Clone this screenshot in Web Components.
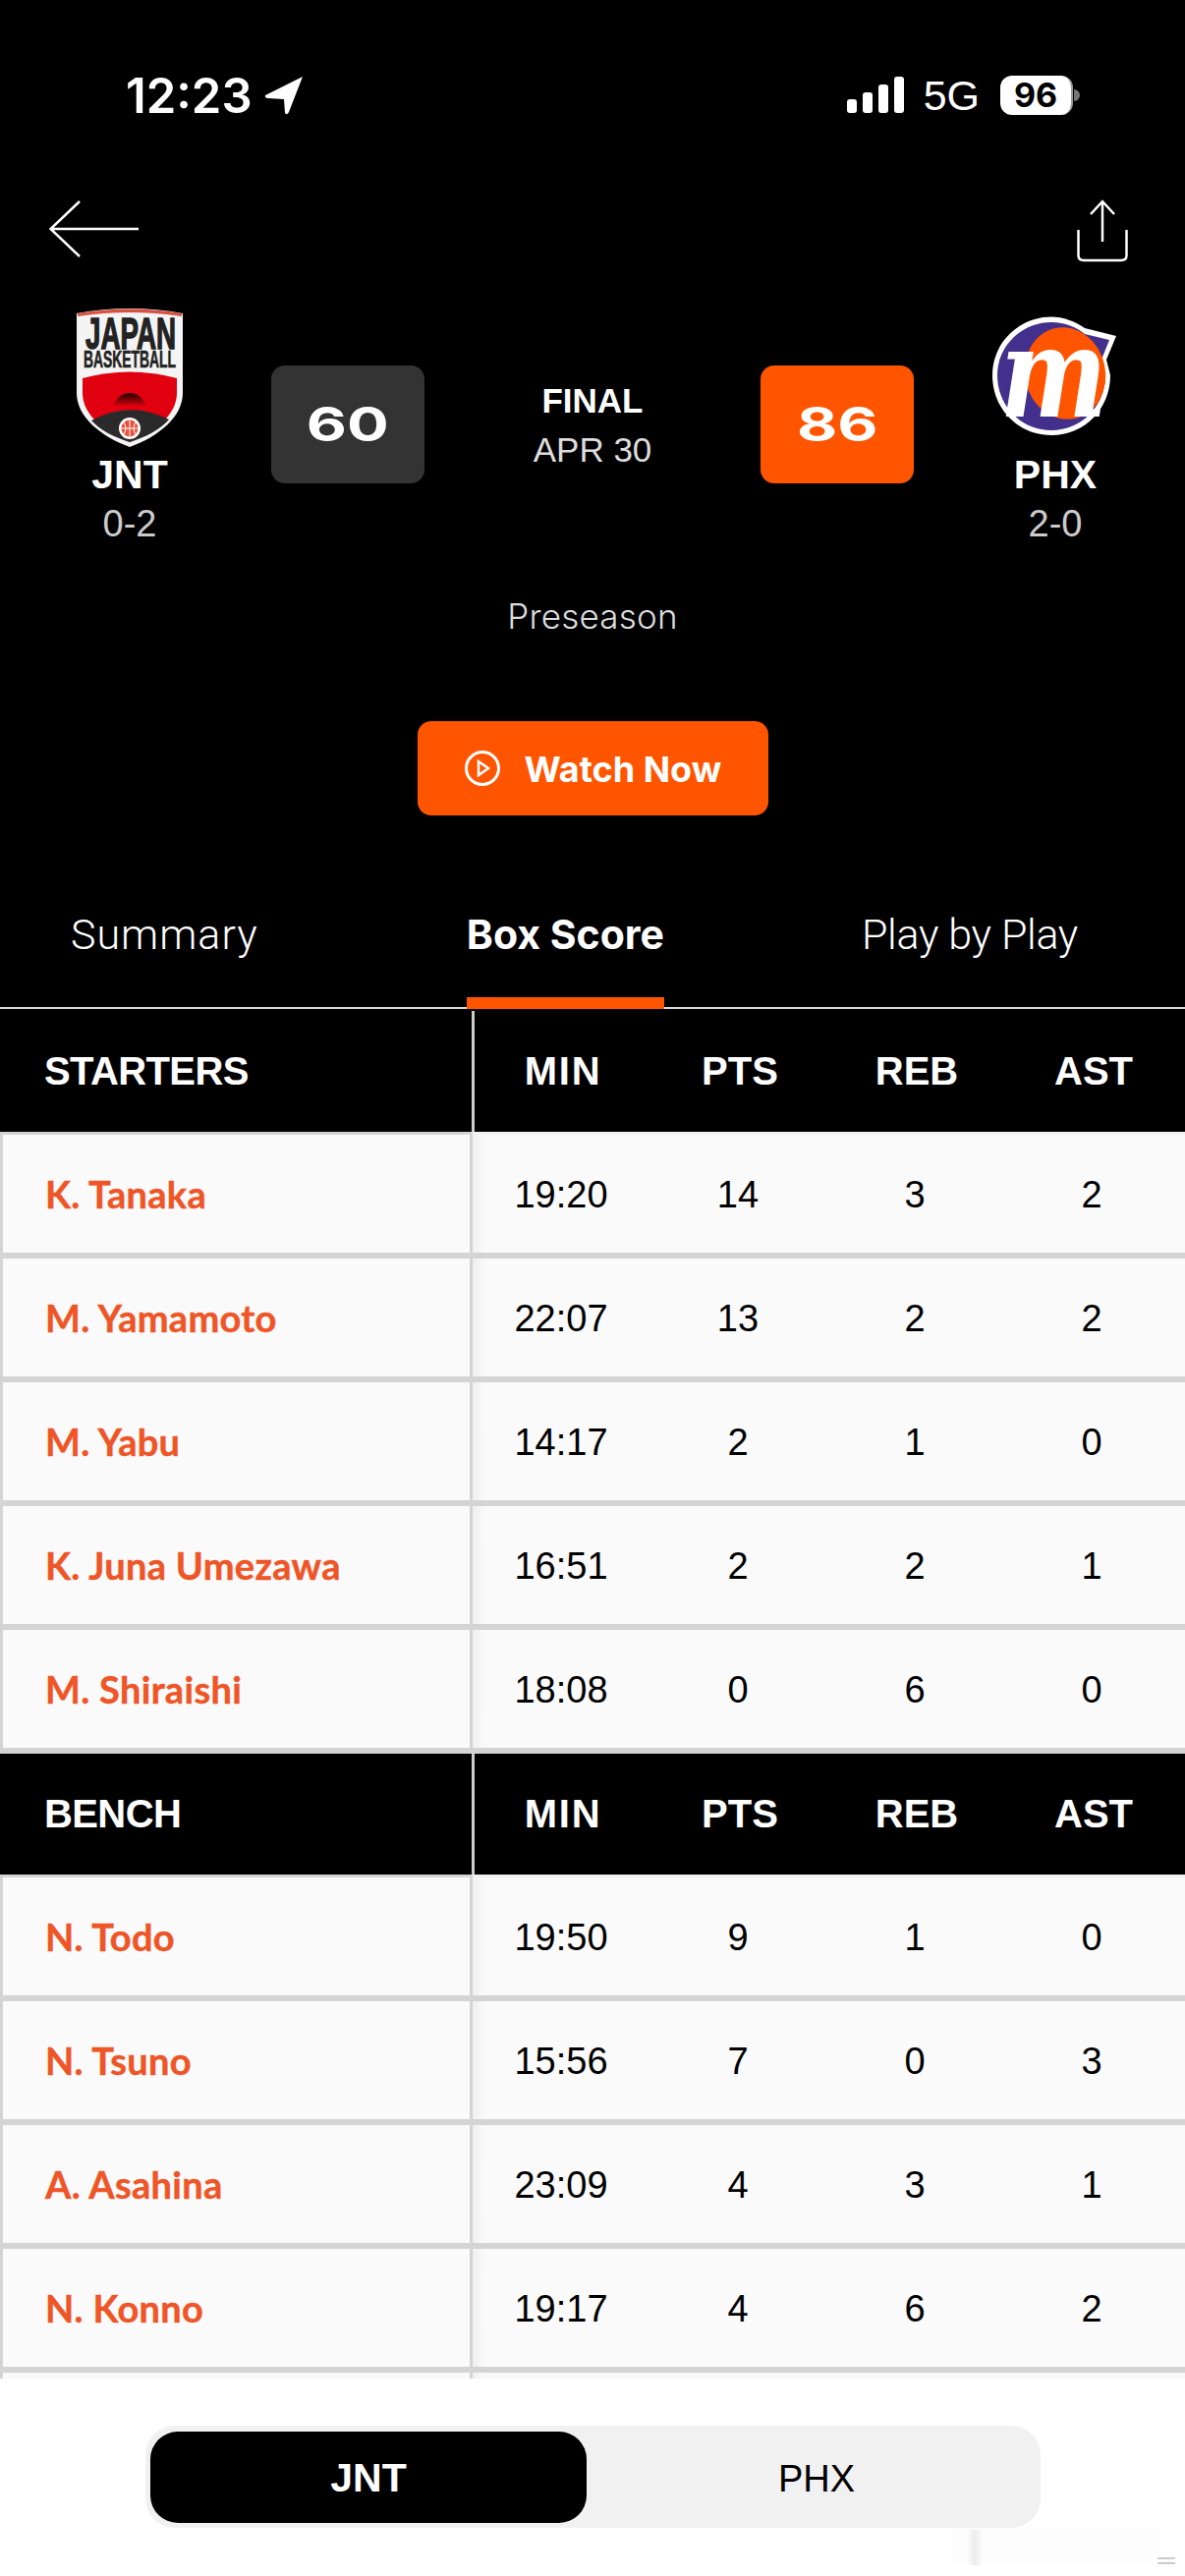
<!DOCTYPE html>
<html>
<head>
<meta charset="utf-8">
<title>Box Score</title>
<style>
    html, body { margin: 0; padding: 0; background: #fff; }
    body { width: 1206px; height: 2622px; overflow: hidden; font-family: "Liberation Sans", Arial, sans-serif; }
    .top { background: #000; display: block; }
</style>
</head>
<body>
<div class="top">
    <status-bar></status-bar>
    <nav-bar></nav-bar>
    <game-header></game-header>
    <watch-button>Watch Now</watch-button>
    <tab-bar></tab-bar>
</div>
<box-table></box-table>
<team-switch></team-switch>

<script>
// Status bar: clock, location arrow, signal, 5G, battery
class StatusBar extends HTMLElement {
    connectedCallback() {
        this.attachShadow({ mode: 'open' }).innerHTML = `
            <style>
                :host { display: flex; align-items: center; height: 190px; padding: 4px 107px 0 128px; box-sizing: border-box; color: #fff; }
                .time { font: 600 49px/1 Inter, sans-serif; letter-spacing: 0; }
                .loc { margin-left: 12px; }
                .right { margin-left: auto; display: flex; align-items: center; }
                .g { font: 400 43px/1 "Liberation Sans", sans-serif; margin-left: 20px; }
                .batt { margin-left: 21px; width: 74px; height: 40px; border-radius: 12px; background: #fff; border-right: 2px solid #999; box-sizing: border-box; color: #000; font: 700 34px/40px Inter, sans-serif; text-align: center; }
                .nub { width: 6px; height: 12px; margin-left: 1px; background: #777; border-radius: 0 6px 6px 0; }
            </style>
            <span class="time">12:23</span>
            <svg class="loc" width="40" height="40" viewBox="0 0 40 40"><path d="M39 1 L1 20 Q0 23 4 23 L20 24 L21 38 Q23 41 25 37 Z" fill="#fff"/></svg>
            <div class="right">
                <svg width="58" height="38" viewBox="0 0 58 38" fill="#fff">
                    <rect x="0" y="23" width="10" height="14" rx="3"/>
                    <rect x="16" y="16" width="10" height="21" rx="3"/>
                    <rect x="32" y="8" width="10" height="29" rx="3"/>
                    <rect x="48" y="0" width="10" height="37" rx="3"/>
                </svg>
                <span class="g">5G</span>
                <span class="batt">96</span>
                <span class="nub"></span>
            </div>`;
    }
}

// Back arrow and share icon
class NavBar extends HTMLElement {
    connectedCallback() {
        this.attachShadow({ mode: 'open' }).innerHTML = `
            <style>
                :host { display: flex; justify-content: space-between; height: 122px; padding: 13px 58px 0 50px; box-sizing: border-box; }
                svg { display: block; fill: none; stroke: #fff; stroke-width: 2.5; }
            </style>
            <svg width="92" height="60" viewBox="0 0 92 60"><path d="M31 2 L1.5 30 L31 58 M1.5 30 H91"/></svg>
            <svg width="52" height="64" viewBox="0 0 52 64"><path d="M26 43 V2 M14 15 L26 2 L38 15 M1.5 31 V57 Q1.5 62 7 62 H45 Q50.500 62 50.500 57 V31"/></svg>`;
    }
}

// One team column: logo slot, abbreviation, record
class TeamBlock extends HTMLElement {
    connectedCallback() {
        this.attachShadow({ mode: 'open' }).innerHTML = `
            <style>
                :host { display: flex; flex-direction: column; align-items: center; color: #fff; }
                .logo { height: 143px; display: flex; align-items: center; justify-content: center; }
                .name { font: 700 41px/46px "Liberation Sans", sans-serif; margin-top: 5px; }
                .rec { font: 400 38px/44px "Liberation Sans", sans-serif; color: #ccc; margin-top: 5px; }
            </style>
            <div class="logo"><slot></slot></div>
            <div class="name">${this.getAttribute('name')}</div>
            <div class="rec">${this.getAttribute('record')}</div>`;
    }
}

class ScoreBox extends HTMLElement {
    connectedCallback() {
        this.attachShadow({ mode: 'open' }).innerHTML = `
            <style>
                :host { display: flex; align-items: center; justify-content: center; width: 156px; height: 120px; margin-top: 60px; border-radius: 14px; background: var(--bg, #333); color: #fff; }
                span { font: 700 48px/1 Inter, sans-serif; transform: scaleX(1.32); }
            </style>
            <span><slot></slot></span>`;
    }
}

class GameHeader extends HTMLElement {
    connectedCallback() {
        this.attachShadow({ mode: 'open' }).innerHTML = `
            <style>
                :host { display: block; color: #fff; }
                .row { display: grid; grid-template-columns: 264px 12px 156px 342px 156px 276px; }
                .c { display: flex; flex-direction: column; align-items: center; padding-top: 76px; font-family: "Liberation Sans", sans-serif; }
                .final { font: 700 35px/40px "Liberation Sans", sans-serif; }
                .date { font: 400 35px/40px "Liberation Sans", sans-serif; margin-top: 10px; color: #ddd; }
                .right { padding-left: 12px; }
                .pre { text-align: center; font: 300 35px/44px Inter, sans-serif; color: #ddd; margin-top: 50px; letter-spacing: .2px; }
                svg { overflow: visible; display: block; }
                text { font-family: "Liberation Sans", sans-serif; }
            </style>
            <div class="row">
                <team-block name="JNT" record="0-2">
                    <svg width="108" height="143" viewBox="0 0 108 143">
                        <defs>
                            <linearGradient id="arch" x1="0" y1="0" x2="0" y2="1">
                                <stop offset="0" stop-color="#200"/><stop offset="1" stop-color="#e0000f"/>
                            </linearGradient>
                        </defs>
                        <path d="M0 7 Q54 -3 108 7 V88 C108 112 84 132 54 143 C24 132 0 112 0 88 Z" fill="#f4f4f4"/>
                        <path d="M1 7 Q54 -2 107 7 L107 10 Q54 2 1 10 Z" fill="#d9503f"/>
                        <text x="55" y="43" text-anchor="middle" font-size="44" font-weight="700" fill="#222" stroke="#222" stroke-width="1.4" textLength="92" lengthAdjust="spacingAndGlyphs">JAPAN</text>
                        <text x="54" y="62" text-anchor="middle" font-size="23" font-weight="700" fill="#222" stroke="#222" stroke-width=".6" textLength="94" lengthAdjust="spacingAndGlyphs">BASKETBALL</text>
                        <path d="M6 73 Q54 60 102 73 V88 C102 110 80 128 54 138 C28 128 6 110 6 88 Z" fill="#e0000f"/>
                        <path d="M37 102 Q42 88 54 88 Q66 88 71 102 Q54 98 37 102 Z" fill="url(#arch)"/>
                        <path d="M15 116 Q54 95 94 115 C84 126 70 133 54 138 C38 133 24 126 15 116 Z" fill="#2a2a2a"/>
                        <circle cx="54" cy="124" r="11" fill="#fff"/>
                        <circle cx="54" cy="124" r="8.500" fill="#e5533d"/>
                        <path d="M54 116 V132 M46 124 H62 M48 118 Q52 124 48 130 M60 118 Q56 124 60 130" stroke="#fff" stroke-width="1" fill="none"/>
                    </svg>
                </team-block>
                <span></span>
                <score-box>60</score-box>
                <div class="c"><span class="final">FINAL</span><span class="date">APR 30</span></div>
                <score-box style="--bg:#ff5500">86</score-box>
                <div class="right">
                    <team-block name="PHX" record="2-0">
                        <svg width="128" height="124" viewBox="0 0 128 124">
                            <path d="M60 .5 C72 .5 84 5 94 12 L126 20 L116 44 L120 60 C120 94 94 121 60 121 C26 121 0 94 0 60 C0 27 27 .5 60 .5 Z" fill="#fff"/>
                            <path d="M60 6 C74 6 86 11 94 18 L119 24 L111 44 L115 60 C115 91 91 116 60 116 C29 116 5 91 5 60 C5 30 30 6 60 6 Z" fill="#43308c"/>
                            <ellipse cx="74" cy="58" rx="41" ry="47" transform="rotate(-12 74 58)" fill="#ff5500"/>
                            <text transform="translate(8 102) scale(.8 1)" font-size="128" font-style="italic" font-weight="700" fill="#fff" style="font-family:'DejaVu Serif',serif">m</text>
                        </svg>
                    </team-block>
                </div>
            </div>
            <div class="pre">Preseason</div>`;
    }
}

class WatchButton extends HTMLElement {
    connectedCallback() {
        this.attachShadow({ mode: 'open' }).innerHTML = `
            <style>
                :host { display: flex; justify-content: center; padding-top: 85px; }
                .btn { display: flex; align-items: center; width: 357px; height: 96px; padding-left: 47px; box-sizing: border-box; border-radius: 14px; background: #ff5500; color: #fff; font: 700 36px/1 Inter, sans-serif; }
                svg { margin-right: 24px; }
                span { margin-top: 2px; }
            </style>
            <div class="btn">
                <svg width="38" height="38" viewBox="0 0 38 38" fill="none" stroke="#fff" stroke-width="3"><circle cx="19" cy="19" r="16.500"/><path d="M15 12 L25 19 L15 26 Z" stroke-width="2.500"/></svg>
                <span><slot></slot></span>
            </div>`;
    }
}

class TabBar extends HTMLElement {
    connectedCallback() {
        this.attachShadow({ mode: 'open' }).innerHTML = `
            <style>
                :host { display: block; height: 199px; box-sizing: border-box; padding-top: 70px; color: #fff; }
                .tabs { display: flex; padding-left: 72px; height: 127px; box-sizing: border-box; border-bottom: 2px solid #d8d8d8; margin-bottom: 2px; }
                .tab { font: 300 43px/56px Roboto, sans-serif; height: 127px; padding-top: 23px; box-sizing: border-box; letter-spacing: 1px; }
                .tab:nth-child(2) { margin-left: 212px; font: 700 41px/56px Inter, sans-serif; letter-spacing: 0; border-bottom: 12px solid #ff5500; }
                .tab:nth-child(3) { margin-left: 201px; letter-spacing: -.3px; }
            </style>
            <div class="tabs">
                <div class="tab">Summary</div>
                <div class="tab">Box Score</div>
                <div class="tab">Play by Play</div>
            </div>`;
    }
}

// Header row and rows of one group of players
class BoxSection extends HTMLElement {
    connectedCallback() {
        const rows = JSON.parse(this.getAttribute('rows'));
        const cols = ['MIN', 'PTS', 'REB', 'AST'];
        this.attachShadow({ mode: 'open' }).innerHTML = `
            <style>
                :host { display: block; font-family: "Liberation Sans", sans-serif; }
                .head, .row { display: grid; grid-template-columns: 481px 180px 180px 180px 185px; }
                .head { height: 123px; background: #000; color: #fff; font: 700 40px/123px "Liberation Sans", sans-serif; }
                .head .t { padding-left: 45px; letter-spacing: -.6px; border-right: 3px solid #ccc; width: 435px; }
                .head .h { text-align: center; transform: translateX(2px); }
                .head .h:nth-child(2) { letter-spacing: 1.8px; }
                .head .h:last-child { padding-right: 5px; }
                .rule { height: 3px; background: linear-gradient(90deg, #d4d4d4 481px, #f2f2f2 481px); }
                .row { height: 126px; color: #000; font: 400 38px/122px "Liberation Sans", sans-serif; background: #fafafa; }
                .name { box-sizing: border-box; height: 126px; padding-left: 43px; border-left: 3px solid #d4d4d4; border-right: 3px solid #d4d4d4; border-bottom: 6px solid #d4d4d4; color: #ee5527; font: 700 38px/120px Lato, sans-serif; letter-spacing: .3px; -webkit-text-stroke: .4px #ee5527; }
                .v { height: 120px; text-align: center; border-bottom: 6px solid #d4d4d4; }
                .v:nth-child(2) { background: linear-gradient(90deg, #efefef, #fafafa 12px); }
                .v:last-child { padding-right: 5px; }
            </style>
            <div class="head">
                <div class="t">${this.getAttribute('label')}</div>
                ${cols.map(c => `<div class="h">${c}</div>`).join('')}
            </div>
            <div class="rule"></div>
            ${rows.map(r => `<div class="row">
                <div class="name">${r[0]}</div>
                ${r.slice(1).map(v => `<div class="v">${v}</div>`).join('')}
            </div>`).join('')}`;
    }
}

class BoxTable extends HTMLElement {
    connectedCallback() {
        const starters = [
            ['K. Tanaka', '19:20', 14, 3, 2],
            ['M. Yamamoto', '22:07', 13, 2, 2],
            ['M. Yabu', '14:17', 2, 1, 0],
            ['K. Juna Umezawa', '16:51', 2, 2, 1],
            ['M. Shiraishi', '18:08', 0, 6, 0]
        ];
        const bench = [
            ['N. Todo', '19:50', 9, 1, 0],
            ['N. Tsuno', '15:56', 7, 0, 3],
            ['A. Asahina', '23:09', 4, 3, 1],
            ['N. Konno', '19:17', 4, 6, 2],
            ['', '', '', '', '']
        ];
        this.attachShadow({ mode: 'open' }).innerHTML = `
            <style>
                :host { display: block; height: 1392px; overflow: hidden; background: #fafafa; }
            </style>
            <box-section label="STARTERS" rows='${JSON.stringify(starters)}'></box-section>
            <box-section label="BENCH" rows='${JSON.stringify(bench)}'></box-section>`;
    }
}

class TeamSwitch extends HTMLElement {
    connectedCallback() {
        this.attachShadow({ mode: 'open' }).innerHTML = `
            <style>
                :host { display: block; position: relative; height: 201px; box-sizing: border-box; padding: 48px 147px 0 148px; background: #fff; }
                .track { display: grid; grid-template-columns: 444px 1fr; height: 104px; padding: 6px 0 5px 5px; box-sizing: border-box; border-radius: 30px; background: #f1f1f1; }
                .opt { display: flex; align-items: center; justify-content: center; font: 400 38px/1 "Liberation Sans", sans-serif; color: #000; padding: 2px 0 0 6px; }
                .on { background: #000; color: #fff; border-radius: 28px; font: 700 41px/1 "Liberation Sans", sans-serif; padding-left: 0; }
                /* faint smudge left where the home indicator was painted out */
                .smudge { position: absolute; left: 968px; top: 152px; width: 212px; height: 36px; background: #fdfdfd; }
                .streak { position: absolute; left: 984px; top: 154px; width: 16px; height: 36px; background: linear-gradient(90deg, transparent, #ececec, transparent); }
                .mark { position: absolute; left: 1178px; top: 182px; width: 18px; height: 3px; border-top: 2px solid #ccc; border-bottom: 2px solid #ccc; }
            </style>
            <div class="track">
                <div class="opt on">JNT</div>
                <div class="opt">PHX</div>
            </div>
            <div class="smudge"></div>
            <div class="streak"></div>
            <div class="mark"></div>`;
    }
}

customElements.define('status-bar', StatusBar);
customElements.define('nav-bar', NavBar);
customElements.define('team-block', TeamBlock);
customElements.define('score-box', ScoreBox);
customElements.define('game-header', GameHeader);
customElements.define('watch-button', WatchButton);
customElements.define('tab-bar', TabBar);
customElements.define('box-section', BoxSection);
customElements.define('box-table', BoxTable);
customElements.define('team-switch', TeamSwitch);
</script>
</body>
</html>
